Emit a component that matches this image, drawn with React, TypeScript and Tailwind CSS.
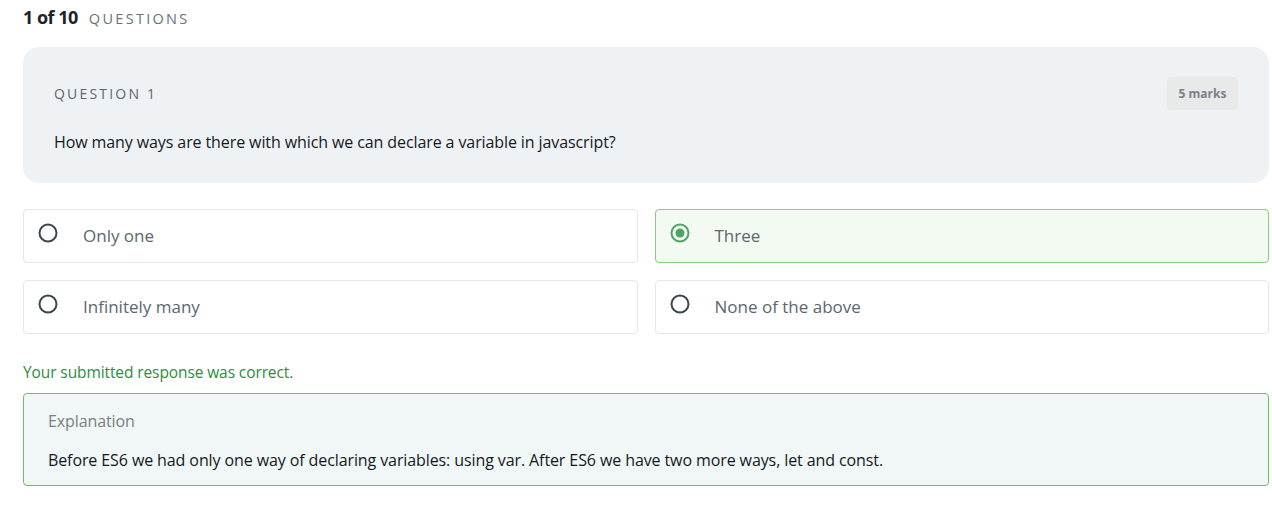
const OPTIONS = [
  { label: "Only one", selected: false },
  { label: "Three", selected: true },
  { label: "Infinitely many", selected: false },
  { label: "None of the above", selected: false },
];

function Radio({ checked }: { checked: boolean }) {
  return (
    <svg width="20" height="20" viewBox="0 0 20 20" className="shrink-0">
      <circle
        cx="10"
        cy="10"
        r="8.5"
        fill="none"
        stroke={checked ? "#4fa463" : "#38474f"}
        strokeWidth="2"
      />
      {checked && <circle cx="10" cy="10" r="4.5" fill="#4fa463" />}
    </svg>
  );
}

export default function App() {
  return (
    <div className="min-h-[512px] bg-white pl-[23px] pr-[3px] pt-[5px] font-['Open_Sans',sans-serif] text-[#1d2329]">
      <div className="flex h-[24px] items-baseline gap-[11px]">
        <span className="text-[18px] font-bold leading-[24px] tracking-[-0.5px]">1 of 10</span>
        <span className="text-[14.5px] leading-[24px] tracking-[2.3px] text-[#6b7179]">QUESTIONS</span>
      </div>

      <div className="mt-[18px] h-[136px] rounded-[16px] bg-[#eef2f5] px-[31px] pt-[30px]">
        <div className="flex h-[33px] items-center justify-between">
          <span className="text-[14px] tracking-[2.2px] text-[#5f666d]">QUESTION 1</span>
          <span className="flex h-[33px] w-[71px] items-center justify-center rounded-[4px] bg-[#e8eaea] text-[12px] font-bold text-[#7b8186]">
            5 marks
          </span>
        </div>
        <p className="mt-[21px] text-[16px] leading-[22px] tracking-[-0.1px] text-[#15191d]">
          How many ways are there with which we can declare a variable in javascript?
        </p>
      </div>

      <div className="mt-[26px] grid grid-cols-2 gap-x-[17px] gap-y-[17px]">
        {OPTIONS.map((o) => (
          <div
            key={o.label}
            className={`flex h-[54px] items-center gap-[25px] rounded-[4px] border px-[14px] ${
              o.selected
                ? "border-[#84cf7e] bg-[#f3faf2]"
                : "border-[#e4e6e7] bg-white"
            }`}
          >
            <div className="-mt-[6px]">
              <Radio checked={o.selected} />
            </div>
            <span className="text-[17px] text-[#5b6670]">{o.label}</span>
          </div>
        ))}
      </div>

      <p className="mt-[27px] h-[22px] text-[15.5px] leading-[22px] tracking-[-0.1px] text-[#2e8b41]">
        Your submitted response was correct.
      </p>

      <div className="mt-[10px] h-[93px] rounded-[4px] border border-[#6cc061] bg-[#f1f6f6] px-[24px] pt-[16px]">
        <p className="text-[16px] leading-[22px] tracking-[-0.1px] text-[#7a7f84]">Explanation</p>
        <p className="mt-[17px] text-[16px] leading-[22px] tracking-[-0.1px] text-[#15191d]">
          Before ES6 we had only one way of declaring variables: using var. After ES6 we have
          two more ways, let and const.
        </p>
      </div>
    </div>
  );
}
